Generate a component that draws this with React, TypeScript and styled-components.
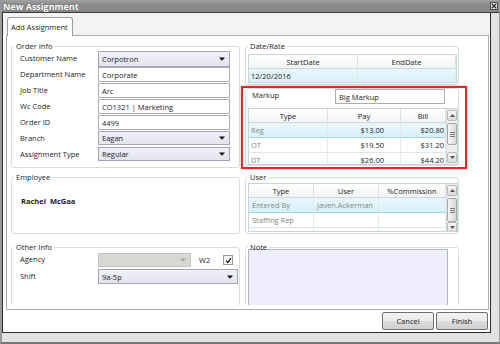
import React from "react";
import styled, { createGlobalStyle } from "styled-components";

const Global = createGlobalStyle`
  html, body { margin: 0; padding: 0; background: #ffffff; }
  * { box-sizing: border-box; }
`;

const FONT = `"Open Sans", "Noto Sans", "Liberation Sans", sans-serif`;

const Window = styled.div`
  width: 500px;
  height: 344px;
  display: flex;
  flex-direction: column;
  background: #e2e2e2;
  border-left: 2px solid #9a9a9a;
  border-right: 1px solid #9a9a9a;
  border-bottom: 2px solid #777777;
  overflow: hidden;
  font-family: ${FONT};
  font-size: 7.5px;
  color: #1c1c1c;
`;

const TitleBar = styled.div`
  height: 13px;
  flex: none;
  margin-left: -2px;
  margin-right: -1px;
  display: flex;
  align-items: center;
  justify-content: space-between;
  padding: 0 2px 0 3px;
  background: linear-gradient(#a4a4a4, #8c8c8c 35%, #878787);
  border-bottom: 1px solid #3a3a3a;
  color: #ffffff;
  font-weight: 700;
  font-size: 9px;
  text-shadow: 0 0 1px #4a4a4a;
`;

const CloseBox = styled.div`
  width: 8px;
  height: 8px;
  border: 1px solid #4a4a4a;
  background: #ececec;
  display: grid;
  place-items: center;
`;

const Frame = styled.div`
  flex: 1;
  display: flex;
  flex-direction: column;
  margin: 0 8px 9px 0;
  border: 1px solid #2c2c2c;
  border-top: none;
  background: #ffffff;
`;

const TabStrip = styled.div`
  height: 22px;
  flex: none;
  display: flex;
  align-items: flex-end;
  padding-left: 4px;
  background: #f3f3f3;
`;

const Tab = styled.div`
  position: relative;
  z-index: 1;
  width: 66px;
  height: 19px;
  margin-bottom: -1px;
  border: 1px solid #9c9c9c;
  border-bottom: none;
  border-radius: 3px 3px 0 0;
  background: #ffffff;
  display: flex;
  align-items: center;
  padding-left: 3px;
  padding-bottom: 1px;
`;

const TabPanel = styled.div`
  height: 275px;
  flex: none;
  margin: 0 1px 0 3px;
  border: 1px solid #acacac;
  background: #ffffff;
  padding-bottom: 3px;
`;

const ScrollArea = styled.div`
  height: 269px;
  overflow: hidden;
  display: flex;
  gap: 5px;
  padding: 5px 0 0 4px;
`;

const Column = styled.div<{ $w: number }>`
  width: ${(p) => p.$w}px;
  flex: none;
  display: flex;
  flex-direction: column;
`;

const Group = styled.fieldset<{ $mt?: number }>`
  margin: ${(p) => p.$mt ?? 0}px 0 0;
  padding: 0;
  min-width: 0;
  border: 1px solid #d3dde3;
  border-radius: 3px;
`;

const Legend = styled.legend`
  margin-left: 2px;
  padding: 0 2px;
  line-height: 10px;
  font-size: 7.5px;
  color: #1c1c1c;
`;

const FormGrid = styled.div<{ $pad: string }>`
  display: grid;
  grid-template-columns: 78px 1fr;
  grid-auto-rows: 16px;
  padding: ${(p) => p.$pad};
`;

const Label = styled.div`
  display: flex;
  align-items: center;
  padding-bottom: 2px;
  white-space: nowrap;
`;

const FieldCell = styled.div<{ $h: number }>`
  display: flex;
  align-items: flex-start;
  & > * { height: ${(p) => p.$h}px; }
`;

const TextBox = styled.div<{ $w?: number }>`
  width: ${(p) => (p.$w ? `${p.$w}px` : "100%")};
  height: 15px;
  border: 1px solid #abadb3;
  background: #ffffff;
  display: flex;
  align-items: center;
  padding-left: 3px;
  white-space: nowrap;
`;

const ComboBox = styled.div<{ $w?: number; $disabled?: boolean }>`
  width: ${(p) => (p.$w ? `${p.$w}px` : "100%")};
  flex: none;
  border: 1px solid ${(p) => (p.$disabled ? "#c2c2c2" : "#a4a4b8")};
  background: ${(p) =>
    p.$disabled ? "#d7d7d3" : "linear-gradient(#f0f0f9, #e4e4f1)"};
  display: flex;
  align-items: center;
  justify-content: space-between;
  padding: 0 4px 0 3px;
  white-space: nowrap;
`;

const Arrow: React.FC<{ color?: string }> = ({ color = "#111" }) => (
  <svg width="6" height="4" viewBox="0 0 6 4">
    <polygon points="0,0.5 6,0.5 3,3.8" fill={color} />
  </svg>
);

const EmployeeBody = styled.div`
  height: 51px;
  padding: 14px 0 0 9px;
  font-weight: 700;
  line-height: 10px;
`;

const AgencyRow = styled.div`
  display: flex;
  align-items: center;
  height: 14px;
`;

const W2 = styled.span`
  margin-left: 8px;
`;

const CheckBox = styled.div`
  width: 10px;
  height: 10px;
  margin-left: auto;
  margin-right: 5px;
  border: 1px solid #9a9a9a;
  background: linear-gradient(#f2f2f2, #ffffff);
  display: grid;
  place-items: center;
`;

const OtherBody = styled.div`
  display: grid;
  grid-template-columns: 78px 1fr;
  grid-template-rows: 14px 15px;
  row-gap: 2px;
  padding: 1px 1px 40px 8px;
`;

const GridWrap = styled.div<{ $pad: string }>`
  padding: ${(p) => p.$pad};
`;

const Table = styled.div<{ $h: number }>`
  height: ${(p) => p.$h}px;
  border: 1px solid #c9d3da;
  background: #ffffff;
  display: flex;
  overflow: hidden;
`;

const TableMain = styled.div<{ $cols: string }>`
  flex: 1;
  display: grid;
  grid-template-columns: ${(p) => p.$cols};
  grid-auto-rows: 15px;
  grid-template-rows: 14px;
  align-content: start;
`;

const HeadCell = styled.div`
  display: flex;
  align-items: center;
  justify-content: center;
  background: linear-gradient(#ffffff, #f2f4f5);
  border-right: 1px solid #dbe2e6;
  border-bottom: 1px solid #cdd7dd;
  white-space: nowrap;
`;

const Cell = styled.div<{
  $sel?: boolean;
  $right?: boolean;
  $muted?: boolean;
  $pl: number;
  $pr: number;
}>`
  display: flex;
  align-items: center;
  justify-content: ${(p) => (p.$right ? "flex-end" : "flex-start")};
  padding: 0 ${(p) => p.$pr}px 0 ${(p) => p.$pl}px;
  color: ${(p) => (p.$muted ? "#858585" : "#1c1c1c")};
  background: ${(p) =>
    p.$sel ? "linear-gradient(#e8f6fc, #d9f1fa)" : "#ffffff"};
  border-right: 1px solid #e4e9ec;
  border-bottom: 1px solid ${(p) => (p.$sel ? "#9fd6ec" : "#e1e6e9")};
  white-space: nowrap;
`;

const VScroll = styled.div`
  width: 11px;
  flex: none;
  display: flex;
  flex-direction: column;
  background: #efefef;
  border-left: 1px solid #e0e0e0;
  padding: 1px 0;
`;

const ScrollBtn = styled.div`
  height: 11px;
  flex: none;
  border: 1px solid #b9b9b9;
  border-radius: 2px;
  background: linear-gradient(#f7f7f7, #dcdcdc);
  display: grid;
  place-items: center;
`;

const Thumb = styled.div<{ $h: number; $mt: number }>`
  height: ${(p) => p.$h}px;
  margin-top: ${(p) => p.$mt}px;
  flex: none;
  border: 1px solid #a9a9a9;
  border-radius: 2px;
  background: linear-gradient(90deg, #f6f6f6, #d8d8d8);
  display: flex;
  flex-direction: column;
  align-items: center;
  justify-content: center;
  gap: 1px;
  & > span {
    width: 5px;
    height: 1px;
    background: #7a7a7a;
  }
`;

const Spacer = styled.div`
  flex: 1;
`;

const MarkupBox = styled.div`
  position: relative;
  margin-top: 3px;
  height: 78px;
  border: 1px solid #d3dde3;
  border-radius: 3px;
`;

const Highlight = styled.div`
  position: absolute;
  left: -5px;
  top: -3px;
  right: -9px;
  bottom: -4px;
  border: 2px solid #e3262b;
  box-shadow: 0 0 2px rgba(227, 38, 43, 0.45);
  pointer-events: none;
`;

const MarkupRow = styled.div`
  display: flex;
  align-items: flex-start;
  height: 15px;
  padding-left: 6px;
`;

const MarkupLabel = styled.div`
  width: 83px;
  line-height: 10px;
  padding-top: 1px;
`;

const NoteArea = styled.div`
  margin: -3px 0 0 2px;
  width: 200px;
  height: 70px;
  border: 1px solid #b3b5c8;
  background: #eeeefc;
`;

const Footer = styled.div`
  flex: 1;
  display: flex;
  justify-content: flex-end;
  align-items: flex-start;
  gap: 2px;
  padding: 2px 2px 0 0;
`;

const Button = styled.button`
  width: 52px;
  height: 18px;
  border: 1px solid #707070;
  border-radius: 2px;
  background: linear-gradient(#f3f3f3 0%, #ebebeb 48%, #dddddd 52%, #cfcfcf 100%);
  font-family: ${FONT};
  font-size: 7.5px;
  color: #1c1c1c;
  padding: 0;
`;

type Col = { title: string; w: string; right?: boolean; muted?: boolean; pl: number; pr: number };

const UpArrow = () => (
  <svg width="5" height="3" viewBox="0 0 5 3">
    <polygon points="0,3 5,3 2.5,0" fill="#555" />
  </svg>
);
const DownArrow = () => (
  <svg width="5" height="3" viewBox="0 0 5 3">
    <polygon points="0,0 5,0 2.5,3" fill="#555" />
  </svg>
);

const ScrollBar: React.FC<{ thumbH: number; thumbMt: number }> = ({ thumbH, thumbMt }) => (
  <VScroll>
    <ScrollBtn>
      <UpArrow />
    </ScrollBtn>
    <Thumb $h={thumbH} $mt={thumbMt}>
      <span />
      <span />
      <span />
    </Thumb>
    <Spacer />
    <ScrollBtn>
      <DownArrow />
    </ScrollBtn>
  </VScroll>
);

const DataGrid: React.FC<{
  cols: Col[];
  rows: string[][];
  h: number;
  sel?: number;
  scroll?: { h: number; mt: number };
}> = ({ cols, rows, h, sel, scroll }) => (
  <Table $h={h}>
    <TableMain $cols={cols.map((c) => c.w).join(" ")}>
      {cols.map((c) => (
        <HeadCell key={c.title}>{c.title}</HeadCell>
      ))}
      {rows.map((r, ri) =>
        r.map((v, ci) => (
          <Cell
            key={`${ri}-${ci}`}
            $sel={ri === sel}
            $right={cols[ci].right}
            $muted={cols[ci].muted}
            $pl={cols[ci].pl}
            $pr={cols[ci].pr}
          >
            {v}
          </Cell>
        ))
      )}
    </TableMain>
    {scroll && <ScrollBar thumbH={scroll.h} thumbMt={scroll.mt} />}
  </Table>
);

const orderFields: { label: string; value: string; combo?: boolean; h: number }[] = [
  { label: "Customer Name", value: "Corpotron", combo: true, h: 16 },
  { label: "Department Name", value: "Corporate", h: 15 },
  { label: "Job Title", value: "Arc", h: 15 },
  { label: "Wc Code", value: "CO1321 | Marketing", h: 15 },
  { label: "Order ID", value: "4499", h: 15 },
  { label: "Branch", value: "Eagan", combo: true, h: 14 },
  { label: "Assignment Type", value: "Regular", combo: true, h: 14 },
];

export default function App() {
  return (
    <>
      <Global />
      <Window>
        <TitleBar>
          <span>New Assignment</span>
          <CloseBox>
            <svg width="6" height="6" viewBox="0 0 6 6">
              <path d="M0.8 0.8 L5.2 5.2 M5.2 0.8 L0.8 5.2" stroke="#2a2a2a" strokeWidth="1.3" />
            </svg>
          </CloseBox>
        </TitleBar>
        <Frame>
          <TabStrip>
            <Tab>Add Assignment</Tab>
          </TabStrip>
          <TabPanel>
            <ScrollArea>
              <Column $w={229}>
                <Group>
                  <Legend>Order Info</Legend>
                  <FormGrid $pad="0 9px 4px 8px">
                    {orderFields.map((f) => (
                      <React.Fragment key={f.label}>
                        <Label>{f.label}</Label>
                        <FieldCell $h={f.h}>
                          {f.combo ? (
                            <ComboBox>
                              <span>{f.value}</span>
                              <Arrow />
                            </ComboBox>
                          ) : (
                            <TextBox>{f.value}</TextBox>
                          )}
                        </FieldCell>
                      </React.Fragment>
                    ))}
                  </FormGrid>
                </Group>
                <Group $mt={4}>
                  <Legend>Employee</Legend>
                  <EmployeeBody>Rachel&nbsp; McGaa</EmployeeBody>
                </Group>
                <Group $mt={8}>
                  <Legend>Other Info</Legend>
                  <OtherBody>
                    <Label>Agency</Label>
                    <AgencyRow>
                      <ComboBox $w={93} $disabled style={{ height: 14 }}>
                        <span />
                        <Arrow color="#a9a9a9" />
                      </ComboBox>
                      <W2>W2</W2>
                      <CheckBox>
                        <svg width="7" height="7" viewBox="0 0 7 7">
                          <path d="M1 3.6 L2.8 5.5 L6 1.2" stroke="#1a1a1a" strokeWidth="1.3" fill="none" />
                        </svg>
                      </CheckBox>
                    </AgencyRow>
                    <Label>Shift</Label>
                    <ComboBox style={{ height: 15 }}>
                      <span>9a-5p</span>
                      <Arrow />
                    </ComboBox>
                  </OtherBody>
                </Group>
              </Column>
              <Column $w={214}>
                <Group>
                  <Legend>Date/Rate</Legend>
                  <GridWrap $pad="3px 1px 1px 2px">
                    <DataGrid
                      h={29}
                      cols={[
                        { title: "StartDate", w: "109px", pl: 2, pr: 0 },
                        { title: "EndDate", w: "1fr", pl: 2, pr: 0 },
                      ]}
                      rows={[["12/20/2016", ""]]}
                      sel={0}
                    />
                  </GridWrap>
                </Group>
                <MarkupBox>
                  <MarkupRow>
                    <MarkupLabel>Markup</MarkupLabel>
                    <TextBox $w={110}>Big Markup</TextBox>
                  </MarkupRow>
                  <GridWrap $pad="4px 0 0 2px">
                    <DataGrid
                      h={57}
                      cols={[
                        { title: "Type", w: "79px", muted: true, pl: 2, pr: 0 },
                        { title: "Pay", w: "73px", right: true, pl: 0, pr: 16 },
                        { title: "Bill", w: "1fr", right: true, pl: 0, pr: 1 },
                      ]}
                      rows={[
                        ["Reg", "$13.00", "$20.80"],
                        ["OT", "$19.50", "$31.20"],
                        ["DT", "$26.00", "$44.20"],
                      ]}
                      sel={0}
                      scroll={{ h: 22, mt: 2 }}
                    />
                  </GridWrap>
                  <Highlight />
                </MarkupBox>
                <Group $mt={6}>
                  <Legend>User</Legend>
                  <GridWrap $pad="1px 0 1px 2px">
                    <DataGrid
                      h={49}
                      cols={[
                        { title: "Type", w: "65px", muted: true, pl: 3, pr: 0 },
                        { title: "User", w: "65px", muted: true, pl: 3, pr: 0 },
                        { title: "%Commission", w: "1fr", muted: true, pl: 3, pr: 0 },
                      ]}
                      rows={[
                        ["Entered By", "Javen.Ackerman", ""],
                        ["Staffing Rep", "", ""],
                        ["", "", ""],
                      ]}
                      sel={0}
                      scroll={{ h: 24, mt: 2 }}
                    />
                  </GridWrap>
                </Group>
                <Group $mt={8}>
                  <Legend>Note</Legend>
                  <NoteArea />
                </Group>
              </Column>
            </ScrollArea>
          </TabPanel>
          <Footer>
            <Button>Cancel</Button>
            <Button>Finish</Button>
          </Footer>
        </Frame>
      </Window>
    </>
  );
}
